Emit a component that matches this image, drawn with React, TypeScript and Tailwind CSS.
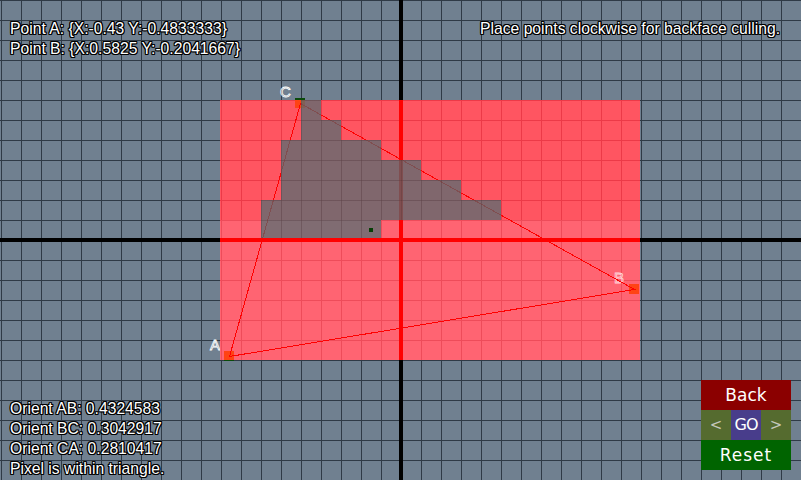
import React from 'react';

type Pt = { x: number; y: number };

// Triangle corners in canvas pixels
const A: Pt = { x: 229, y: 356 };
const B: Pt = { x: 634, y: 289 };
const C: Pt = { x: 300, y: 103 };

// Bounding box of the triangle (snapped to 20px cells)
const BOX = { x: 220, y: 100, w: 420, h: 260 };

// Rasterised cells reported as inside the triangle, one entry per row
const rows = [
  { top: 0, left: 81, w: 20 },
  { top: 20, left: 81, w: 40 },
  { top: 40, left: 61, w: 100 },
  { top: 60, left: 61, w: 140 },
  { top: 80, left: 61, w: 180 },
  { top: 100, left: 41, w: 240 },
  { top: 120, left: 41, w: 120 },
];

const outline =
  '[text-shadow:1px_0_0_#000,-1px_0_0_#000,0_1px_0_#000,0_-1px_0_#000,1px_1px_0_#000,-1px_-1px_0_#000,1px_-1px_0_#000,-1px_1px_0_#000]';

const hudText = `font-['Liberation_Sans',Arial,sans-serif] text-[15.7px] leading-[20px] text-white ${outline} whitespace-nowrap`;

const labelText =
  "absolute font-['Liberation_Sans',Arial,sans-serif] text-[15px] leading-[15px] text-transparent";

const Marker = ({ p }: { p: Pt }) => (
  <div
    className="absolute w-[10px] h-[10px] bg-[#0a4a0a]"
    style={{ left: p.x - 5, top: p.y - 5 }}
  />
);

const InnerMarker = ({ p }: { p: Pt }) => (
  <div
    className="absolute w-[10px] h-[10px] bg-[#ff4314]"
    style={{ left: p.x - 5 - BOX.x, top: p.y - 5 - BOX.y }}
  />
);

export default function App() {
  const rel = (p: Pt) => ({ x: p.x - BOX.x + 0.5, y: p.y - BOX.y + 0.5 });
  const a = rel(A);
  const b = rel(B);
  const c = rel(C);

  return (
    <div className="relative w-[801px] h-[480px] overflow-hidden bg-[#708090] bg-[linear-gradient(to_right,#2f3a46_1px,transparent_1px),linear-gradient(to_bottom,#2f3a46_1px,transparent_1px)] [background-size:20px_20px] [background-position:1px_0]">
      {/* world axes */}
      <div className="absolute left-[399px] top-0 w-[4px] h-[480px] bg-black" />
      <div className="absolute left-0 top-[238px] w-[801px] h-[4px] bg-black" />

      {/* vertex markers (under the bounding box) */}
      <Marker p={A} />
      <Marker p={B} />
      <Marker p={C} />

      {/* vertex labels */}
      <span className={`${labelText} left-[280px] top-[84px] [-webkit-text-stroke:0.8px_white]`}>C</span>
      <span className={`${labelText} left-[210px] top-[337px] [-webkit-text-stroke:0.8px_white]`}>A</span>

      {/* bounding box */}
      <div className="absolute left-[220px] top-[100px] w-[420px] h-[260px] overflow-hidden">
        <div className="h-[120px] bg-[#ff5561] bg-[linear-gradient(to_right,#ec3a48_1px,transparent_1px),linear-gradient(to_bottom,#ec3a48_1px,transparent_1px)] [background-size:20px_20px] [background-position:1px_0]" />
        <div className="h-[140px] bg-[#ff6472] bg-[linear-gradient(to_right,#ee4c5a_1px,transparent_1px),linear-gradient(to_bottom,#ee4c5a_1px,transparent_1px)] [background-size:20px_20px] [background-position:1px_0]" />

        <div className="absolute left-[179px] top-0 w-[4px] h-[260px] bg-[#ff0000]" />

        <span className={`${labelText} left-[394px] top-[170px] [-webkit-text-stroke:0.8px_#ffd2d6]`}>B</span>

        <InnerMarker p={A} />
        <InnerMarker p={B} />
        <InnerMarker p={C} />

        <svg className="absolute inset-0" width={420} height={260} shapeRendering="crispEdges">
          <polygon
            points={`${a.x},${a.y} ${b.x},${b.y} ${c.x},${c.y}`}
            fill="none"
            stroke="#ff0000"
            strokeWidth={1}
          />
        </svg>

        {rows.map((r, i) => (
          <div
            key={i}
            className="absolute h-[20px] bg-[rgba(74,111,114,0.7)] bg-[linear-gradient(to_right,rgba(30,10,10,0.12)_1px,transparent_1px),linear-gradient(to_bottom,rgba(30,10,10,0.12)_1px,transparent_1px)] [background-size:20px_20px]"
            style={{ top: r.top, left: r.left, width: r.w }}
          />
        ))}

        <div className="absolute left-0 top-[138px] w-[420px] h-[4px] bg-[#ff0000]" />
        <div className="absolute left-[149px] top-[128px] w-[4px] h-[4px] bg-[#063f06]" />
      </div>

      {/* HUD overlay */}
      <div className="absolute inset-0 flex flex-col justify-between pt-[19px] pb-[1px] px-[10px]">
        <div className="flex justify-between items-start">
          <div className={hudText}>
            <div>Point A: {'{'}X:-0.43 Y:-0.4833333{'}'}</div>
            <div>Point B: {'{'}X:0.5825 Y:-0.2041667{'}'}</div>
          </div>
          <div className={`${hudText} mr-[11px]`}>Place points clockwise for backface culling.</div>
        </div>

        <div className="flex justify-between items-end">
          <div className={hudText}>
            <div>Orient AB: 0.4324583</div>
            <div>Orient BC: 0.3042917</div>
            <div>Orient CA: 0.2810417</div>
            <div>Pixel is within triangle.</div>
          </div>

          <div className="mb-[9px] w-[90px] flex flex-col font-['DejaVu_Sans',sans-serif] text-white">
            <button className="h-[30px] bg-[#8b0000] text-[17px] leading-[30px]">Back</button>
            <div className="flex h-[30px]">
              <button className="flex-1 bg-[#556b2f] text-[15px] text-[#c4c8bc]">&lt;</button>
              <button className="flex-1 bg-[#483d8b] text-[16px] tracking-[-1px]">GO</button>
              <button className="flex-1 bg-[#556b2f] text-[15px] text-[#c4c8bc]">&gt;</button>
            </div>
            <button className="h-[30px] bg-[#006400] text-[17px] leading-[30px] tracking-[1px]">Reset</button>
          </div>
        </div>
      </div>
    </div>
  );
}
